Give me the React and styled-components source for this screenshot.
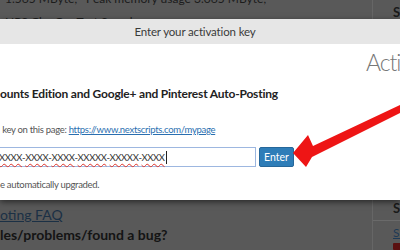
import React from "react";
import styled, { createGlobalStyle } from "styled-components";

const Global = createGlobalStyle`
  html, body {
    margin: 0;
    padding: 0;
    width: 400px;
    height: 250px;
    overflow: hidden;
    background: #595959;
    font-family: Lato, "Open Sans", sans-serif;
  }
`;

const Page = styled.div`
  position: relative;
  width: 400px;
  height: 250px;
  overflow: hidden;
  background: #595959;
`;

const Strip = styled.div`
  display: grid;
  grid-template-columns: 1fr 28px;
  height: ${({ $h }) => $h}px;
  overflow: hidden;
`;

const Main = styled.div`
  display: flex;
  flex-direction: column;
  min-width: 0;
  white-space: nowrap;
  overflow: hidden;
`;

const Side = styled.div`
  border-left: 1px solid #666;
  display: flex;
  flex-direction: column;
  padding-left: 20px;
  white-space: nowrap;
  overflow: hidden;
`;

const SideLabel = styled.div`
  font-size: 13px;
  font-weight: 700;
  color: #1a1a1a;
  line-height: 16px;
  margin-top: ${({ $top }) => $top}px;
`;

const SideRule = styled.div`
  height: 1px;
  background: #6a6a6a;
  margin: 4px 0 0 -20px;
`;

const SideLink = styled.div`
  font-size: 12px;
  color: #1d3a56;
  text-decoration: underline;
  line-height: 14px;
  margin-top: 5px;
`;

const SideIcon = styled.div`
  width: 8px;
  height: 8px;
  background: #5a1010;
  margin-top: 3px;
  border-radius: 1px;
`;

const DimText = styled.div`
  font-size: 12px;
  color: #1c1c1c;
  line-height: 16px;
  margin-top: ${({ $top }) => $top || 0}px;
  padding-left: 5px;
`;

const Modal = styled.div`
  position: relative;
  z-index: 2;
  height: 181px;
  background: #fff;
  box-shadow: 0 2px 6px rgba(0, 0, 0, 0.55);
  display: flex;
  flex-direction: column;
`;

const TitleBar = styled.div`
  height: 25px;
  background: #e6e6e6;
  display: flex;
  align-items: center;
  justify-content: center;
  font-size: 11.5px;
  letter-spacing: -0.15px;
  color: #3a3a3a;
  padding-right: 10px;
`;

const Body = styled.div`
  flex: 1;
  display: flex;
  flex-direction: column;
  white-space: nowrap;
  overflow: hidden;
`;

const BigTitle = styled.div`
  margin: 3px 0 0 366px;
  font-size: 23px;
  letter-spacing: -1.1px;
  font-weight: 300;
  color: #777;
  line-height: 30px;
`;

const Heading = styled.div`
  margin-top: 9px;
  font-size: 12px;
  letter-spacing: -0.2px;
  font-weight: 700;
  color: #222;
  line-height: 16px;
`;

const Line = styled.div`
  font-size: 9.5px;
  letter-spacing: -0.3px;
  color: #555;
  line-height: 14px;
  margin-top: ${({ $top }) => $top}px;

  a {
    color: #2a6fb0;
    text-decoration: underline;
  }
`;

const InputRow = styled.div`
  display: flex;
  align-items: center;
  gap: 3px;
  margin-top: 10px;
`;

const KeyField = styled.div`
  width: 256px;
  height: 18px;
  margin-left: -8px;
  border: 1px solid #9db7e0;
  box-sizing: content-box;
  display: flex;
  align-items: center;
  padding-left: 6px;
  font-size: 9.5px;
  letter-spacing: -0.4px;
  color: #333;
`;

const Word = styled.span`
  text-decoration: underline wavy #e0342a;
  text-decoration-thickness: 1px;
  text-underline-offset: 2px;
`;

const Caret = styled.span`
  display: inline-block;
  width: 1px;
  height: 13px;
  margin-left: 1px;
  background: #222;
  vertical-align: middle;
`;

const Button = styled.button`
  height: 20px;
  width: 35px;
  padding: 0;
  border: 1px solid #26679a;
  border-radius: 2px;
  background: #2e7db8;
  color: #fff;
  font-family: inherit;
  font-size: 10.5px;
`;

const Below = styled.div`
  display: flex;
  flex-direction: column;
`;

const FaqLink = styled.div`
  font-size: 14px;
  color: #1b3045;
  text-decoration: underline;
  line-height: 18px;
  margin-top: 6px;
`;

const BoldLine = styled.div`
  font-size: 14px;
  font-weight: 700;
  color: #141414;
  line-height: 18px;
  margin-top: 2px;
`;

const Arrow = styled.svg`
  position: absolute;
  left: 0;
  top: 0;
  z-index: 3;
  pointer-events: none;
`;

const keyParts = ["XXXX", "XXXX", "XXXX", "XXXXX", "XXXXX", "XXXX"];

export default function App() {
  return (
    <Page>
      <Global />
      <Strip $h={19}>
        <Main>
          <DimText $top={-9}>1.565 MByte; ' Peak memory usage 3.065 MByte;</DimText>
          <DimText $top={7}>NPS Cha   Cas   Test Search</DimText>
        </Main>
        <Side>
          <SideLabel $top={4}>SI</SideLabel>
        </Side>
      </Strip>
      <Modal>
        <TitleBar>Enter your activation key</TitleBar>
        <Body>
          <BigTitle>Activation</BigTitle>
          <Heading>ounts Edition and Google+ and Pinterest Auto-Posting</Heading>
          <Line $top={21}>
            &nbsp;key on this page: <a>https://www.nextscripts.com/mypage</a>
          </Line>
          <InputRow>
            <KeyField>
              {keyParts.map((p, i) => (
                <React.Fragment key={i}>
                  <Word>{p}</Word>
                  {i < keyParts.length - 1 ? "-" : ""}
                </React.Fragment>
              ))}
              <Caret />
            </KeyField>
            <Button>Enter</Button>
          </InputRow>
          <Line $top={11}>e automatically upgraded.</Line>
        </Body>
      </Modal>
      <Strip $h={50}>
        <Below>
          <FaqLink>oting FAQ</FaqLink>
          <BoldLine>les/problems/found a bug?</BoldLine>
        </Below>
        <Side>
          <SideLabel $top={0}>SI</SideLabel>
          <SideRule />
          <SideLink>SI</SideLink>
          <SideIcon />
        </Side>
      </Strip>
      <Arrow width="400" height="250" viewBox="0 0 400 250">
        <polygon
          points="293,153 308,135 313,146 402,104 402,112 312,157 306,167"
          fill="#ee1515"
        />
      </Arrow>
    </Page>
  );
}
